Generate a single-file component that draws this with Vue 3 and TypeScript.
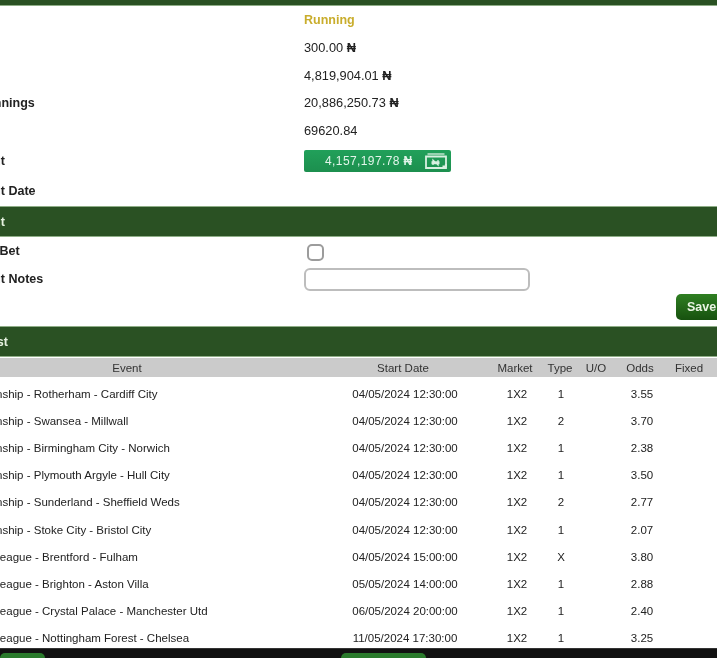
<script setup lang="ts">
interface Bet {
  event: string
  date: string
  type: string
  odds: string
}

const summary = [
  { label: "Status", value: "Running", currency: false, cls: "running" },
  { label: "Stake", value: "300.00", currency: true, cls: "" },
  { label: "Bonus", value: "4,819,904.01", currency: true, cls: "" },
  { label: "Net Winnings", value: "20,886,250.73", currency: true, cls: "" },
  { label: "Odds", value: "69620.84", currency: false, cls: "" },
]

const bets: Bet[] = [
  { event: "Championship - Rotherham - Cardiff City", date: "04/05/2024 12:30:00", type: "1", odds: "3.55" },
  { event: "Championship - Swansea - Millwall", date: "04/05/2024 12:30:00", type: "2", odds: "3.70" },
  { event: "Championship - Birmingham City - Norwich", date: "04/05/2024 12:30:00", type: "1", odds: "2.38" },
  { event: "Championship - Plymouth Argyle - Hull City", date: "04/05/2024 12:30:00", type: "1", odds: "3.50" },
  { event: "Championship - Sunderland - Sheffield Weds", date: "04/05/2024 12:30:00", type: "2", odds: "2.77" },
  { event: "Championship - Stoke City - Bristol City", date: "04/05/2024 12:30:00", type: "1", odds: "2.07" },
  { event: "Premier League - Brentford - Fulham", date: "04/05/2024 15:00:00", type: "X", odds: "3.80" },
  { event: "Premier League - Brighton - Aston Villa", date: "05/05/2024 14:00:00", type: "1", odds: "2.88" },
  { event: "Premier League - Crystal Palace - Manchester Utd", date: "06/05/2024 20:00:00", type: "1", odds: "2.40" },
  { event: "Premier League - Nottingham Forest - Chelsea", date: "11/05/2024 17:30:00", type: "1", odds: "3.25" },
]
</script>

<template>
  <div class="page">
    <div class="content">
      <div class="band top-band"></div>

      <div class="info">
        <div v-for="row in summary" :key="row.label" class="info-row">
          <span class="label">{{ row.label }}</span>
          <span class="value" :class="row.cls">{{ row.value }} <b v-if="row.currency">₦</b></span>
        </div>
        <div class="info-row cash-row">
          <span class="label">Cashout</span>
          <div class="cash-btn">
            <span class="cash-amount">4,157,197.78 <b>₦</b></span>
            <svg class="cash-icon" width="22" height="16" viewBox="0 0 22 16" fill="none" stroke="#d8f0e0">
              <path d="M1 3.500h20v11.500h-20z" stroke-width="1.800" />
              <path d="M2.500 1h17" stroke-width="1.300" />
              <path d="M8 12V7l5 5V7M6.500 9h8M6.500 10.500h8" stroke-width="1.300" />
              <path d="M17.500 13.500h3.500v-2.500" stroke-width="2.200" />
            </svg>
          </div>
        </div>
        <div class="info-row date-row">
          <span class="label">Cashout Date</span>
        </div>
      </div>

      <div class="band section">Cashout</div>

      <div class="form">
        <div class="form-row check-row">
          <span class="label">Cancel Bet</span>
          <input class="check" type="checkbox" />
        </div>
        <div class="form-row notes-row">
          <span class="label">Cashout Notes</span>
          <input class="notes" type="text" />
        </div>
        <div class="form-actions">
          <button class="save" type="button">Save</button>
        </div>
      </div>

      <div class="band section">Bets List</div>

      <div class="grid head">
        <span>Event</span>
        <span>Start Date</span>
        <span>Market</span>
        <span>Type</span>
        <span>U/O</span>
        <span>Odds</span>
        <span>Fixed</span>
      </div>
      <div class="list">
        <div v-for="bet in bets" :key="bet.event" class="grid line">
          <span class="event">{{ bet.event }}</span>
          <span>{{ bet.date }}</span>
          <span>1X2</span>
          <span>{{ bet.type }}</span>
          <span></span>
          <span>{{ bet.odds }}</span>
          <span></span>
        </div>
      </div>
    </div>

    <div class="footer">
      <div class="foot-btn first"></div>
      <div class="foot-btn second"></div>
    </div>
  </div>
</template>

<style scoped>
.page {
  width: 717px;
  height: 658px;
  overflow: hidden;
  display: flex;
  flex-direction: column;
  background: #fff;
  color: #222;
  font-family: "Liberation Sans", Arial, sans-serif;
  font-size: 12.5px;
  filter: blur(0.45px);
}

.content {
  flex: 1;
  min-height: 0;
  overflow: hidden;
}

.band {
  background: #2a5123;
  box-sizing: border-box;
  border-bottom: 1px solid #8fae87;
}

.top-band {
  height: 6px;
}

.section {
  height: 31px;
  border-top: 1px solid #8fae87;
  margin-left: -45px;
  line-height: 31px;
  color: #e6f2e0;
  font-weight: 700;
}

.info {
  margin-left: -45px;
  height: 200px;
}

.info-row,
.form-row {
  display: flex;
  align-items: center;
  height: 27.7px;
}

.label {
  width: 349px;
  flex: none;
  font-weight: 700;
}

.value {
  font-size: 12.8px;
}

.running {
  color: #c9ad2c;
  font-weight: 700;
  font-size: 12.5px;
}

.cash-row {
  height: 33px;
}

.date-row {
  height: 28px;
}

.cash-btn {
  width: 147px;
  height: 22px;
  box-sizing: border-box;
  display: flex;
  align-items: center;
  justify-content: space-between;
  padding: 0 4px 0 21px;
  border-radius: 2px;
  background: linear-gradient(#21a05a, #1c8f4e);
  color: #e2f5ea;
  font-size: 12px;
  letter-spacing: 0.4px;
}

.cash-icon {
  flex: none;
}

.form {
  margin-left: -45px;
  height: 89px;
}

.check-row,
.notes-row {
  height: 28px;
}

.check {
  appearance: none;
  width: 17px;
  height: 17px;
  margin: 2px 0 0 3px;
  box-sizing: border-box;
  border: 2px solid #9c9c9c;
  border-radius: 5px;
  background: #fff;
}

.notes {
  appearance: none;
  width: 226px;
  height: 23px;
  margin: 0;
  box-sizing: border-box;
  border: 2px solid #bdbdbd;
  border-radius: 6px;
  background: #fff;
}

.form-actions {
  display: flex;
  padding-left: 721px;
  margin-top: 1px;
}

.save {
  flex: none;
  width: 60px;
  height: 26px;
  padding: 0 0 0 11px;
  text-align: left;
  border: none;
  border-radius: 5px;
  background: linear-gradient(#2f7f22, #17510f);
  color: #eaf5e4;
  font: 700 12.5px "Liberation Sans", Arial, sans-serif;
}

.grid {
  display: grid;
  margin-left: -50px;
  font-size: 11.5px;
}

.grid > span {
  justify-self: center;
  white-space: nowrap;
}

.head {
  grid-template-columns: 354px 198px 26px 64px 8px 80px 18px;
  height: 19px;
  margin-top: 1px;
  align-items: center;
  background: #cbcbcb;
  width: 800px;
  color: #333;
}

.list {
  padding-top: 3.5px;
}

.line {
  grid-template-columns: 356px 198px 26px 62px 8px 84px 18px;
  height: 27.1px;
  align-items: center;
}

.grid > .event {
  justify-self: start;
}

.footer {
  flex: none;
  height: 10px;
  background: #111;
  border-top: 1px solid #333;
  box-sizing: border-box;
  display: flex;
  gap: 296px;
  overflow: hidden;
  padding-top: 4px;
}

.foot-btn {
  height: 12px;
  border-radius: 5px 5px 0 0;
  background: #2a7a2c;
}

.first {
  width: 45px;
}

.second {
  width: 85px;
}
</style>
